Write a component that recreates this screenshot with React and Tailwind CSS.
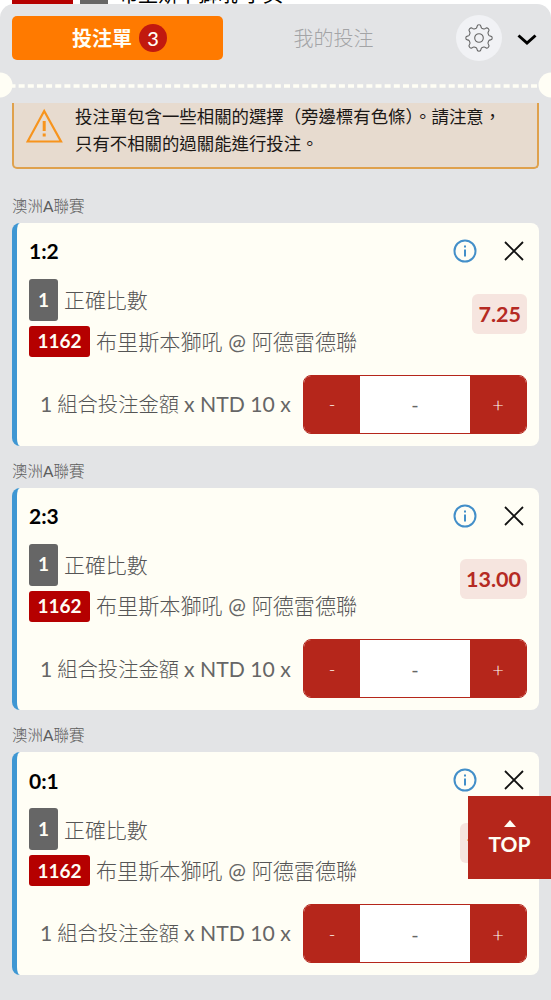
const selections = [
  { score: "1:2", odds: "7.25" },
  { score: "2:3", odds: "13.00" },
  { score: "0:1", odds: "11.00" },
];

const GearIcon = () => (
  <svg width="28" height="28" viewBox="-14 -14 28 28" fill="none" stroke="#666" strokeWidth="1.100" strokeLinejoin="round">
    <circle r="4.3" />
    <path d="M-2.800 -9.800 Q-2 -10.300 -1.900 -11.600 Q-1.800 -13.200 0 -13.200 Q1.800 -13.200 1.900 -11.600 Q2 -10.300 2.800 -9.800 Q4 -9.200 4.900 -9 Q5.800 -8.900 6.600 -9.600 Q7.800 -10.700 9.300 -9.300 Q10.700 -7.800 9.600 -6.600 Q8.900 -5.800 9 -4.900 Q9.200 -4 9.800 -2.800 Q10.300 -2 11.600 -1.900 Q13.200 -1.800 13.200 0 Q13.200 1.800 11.600 1.900 Q10.300 2 9.800 2.800 Q9.200 4 9 4.900 Q8.900 5.800 9.600 6.600 Q10.700 7.800 9.300 9.300 Q7.800 10.700 6.600 9.600 Q5.800 8.900 4.900 9 Q4 9.200 2.800 9.800 Q2 10.300 1.900 11.600 Q1.800 13.200 0 13.200 Q-1.800 13.200 -1.900 11.600 Q-2 10.300 -2.800 9.800 Q-4 9.200 -4.900 9 Q-5.800 8.900 -6.600 9.600 Q-7.800 10.700 -9.300 9.300 Q-10.700 7.800 -9.600 6.600 Q-8.900 5.800 -9 4.900 Q-9.200 4 -9.800 2.800 Q-10.300 2 -11.600 1.900 Q-13.200 1.800 -13.200 0 Q-13.200 -1.800 -11.600 -1.900 Q-10.300 -2 -9.800 -2.800 Q-9.200 -4 -9 -4.900 Q-8.900 -5.800 -9.600 -6.600 Q-10.700 -7.800 -9.300 -9.300 Q-7.800 -10.700 -6.600 -9.600 Q-5.800 -8.900 -4.900 -9 Q-4 -9.200 -2.800 -9.800 Z" />
  </svg>
);

const Header = () => (
  <header className="relative h-[99px] shrink-0 rounded-t-[14px] bg-[#e3e4e6] pt-3 pl-3">
    <div className="flex h-11 items-center">
      <button className="flex h-11 w-[211px] items-center justify-center gap-[7px] rounded-[5px] bg-[#ff7a00] pl-1 text-xl font-bold text-[#fffef5]">
        投注單
        <span className="flex size-7 items-center justify-center rounded-full bg-[#c1190f] text-xl font-medium">3</span>
      </button>
      <button className="w-[221px] text-center text-xl font-light text-[#a3a4a6]">我的投注</button>
      <button className="ml-3 flex size-[46px] items-center justify-center rounded-full bg-[#f1f2f5]">
        <GearIcon />
      </button>
      <svg className="mt-[3px] ml-[15px]" width="20" height="12" viewBox="0 0 20 12" fill="none" stroke="#000" strokeWidth="3">
        <path d="M1.5 1.5 L10 9 L18.500 1.500" />
      </svg>
    </div>
    <svg className="absolute top-[68px] left-0" width="551" height="26" viewBox="0 0 551 26">
      <path d="M9.500 14 H540" stroke="#fffef5" strokeWidth="3.500" strokeDasharray="6 3.150" />
      <circle cx="0" cy="13" r="12.500" fill="#fffef5" />
      <circle cx="551" cy="13" r="12.500" fill="#fffef5" />
    </svg>
  </header>
);

const Notice = () => (
  <div className="mx-3 flex h-[66px] rounded-b-[5px] border-2 border-t-0 border-[#dfa14d] bg-[#e7dbcf] pl-3">
    <svg className="mt-[5px] shrink-0" width="37" height="36" viewBox="0 0 37 36" fill="none" stroke="#f7941d" strokeWidth="2.200">
      <path d="M18.200 3 L35 33.500 H1.600 Z" />
      <path d="M18.200 13 V23 M18.200 25.500 V28.500" strokeWidth="3" />
    </svg>
    <p className="ml-3 text-[17.4px] leading-[27px] whitespace-nowrap text-[#1b1715]">
      投注單包含一些相關的選擇（旁邊標有色條）。請注意，
      <br />
      只有不相關的過關能進行投注。
    </p>
  </div>
);

const Stepper = () => (
  <div className="flex h-[59px] w-[224px] overflow-hidden rounded-lg border border-[#b5261b] bg-white text-[#fffef5]">
    <button className="w-14 bg-[#b5261b] text-lg font-light">-</button>
    <span className="flex flex-1 items-center justify-center text-xl text-[#666]">-</span>
    <button className="w-14 bg-[#b5261b] text-xl font-light">+</button>
  </div>
);

const BetCard = ({ selection }) => {
  const { score, odds } = selection;
  return (
    <section>
      <h2 className="h-[42px] pt-[13px] text-[15.500px] leading-6 text-[#5c5c5c]">
        <span className="font-light">澳洲</span>A<span className="font-light">聯賽</span>
      </h2>
      <div className="h-[222.7px] rounded-lg border-l-[5px] border-[#3f97d3] bg-[#fffef5] pr-3 pl-3">
        <div className="flex h-14 items-center">
          <p className="flex-1 text-[21px] font-bold text-black">{score}</p>
          <svg width="24" height="24" viewBox="0 0 24 24" fill="none" stroke="#438fc9" strokeWidth="2">
            <circle cx="12" cy="12" r="10.500" />
            <path d="M12 10.500 V17.500 M12 6.500 V8.500" />
          </svg>
          <svg className="mr-[3.500px] ml-[27px]" width="20" height="20" viewBox="0 0 20 20" stroke="#111" strokeWidth="1.800">
            <path d="M1 1 L19 19 M19 1 L1 19" />
          </svg>
        </div>
        <div className="flex h-[79px] text-[#555]">
          <div className="flex-1">
            <div className="flex h-[42px] items-center gap-[6px]">
              <span className="flex h-[42px] w-[29px] items-center justify-center rounded-[3px] bg-[#666] text-[19px] font-bold text-[#fffef5]">1</span>
              <span className="text-[20.900px] font-light">正確比數</span>
            </div>
            <div className="mt-[5px] flex h-[31px] items-center gap-[6px]">
              <span className="flex h-[31px] w-[61px] items-center justify-center rounded-[3px] bg-[#b50000] text-[19px] font-bold text-[#fffef5]">1162</span>
              <span className="text-[21.100px] font-light whitespace-nowrap">
                布里斯本獅吼 <span className="font-normal text-[#666]">@</span> 阿德雷德聯
              </span>
            </div>
          </div>
          <span className="mt-[15px] flex h-10 items-center justify-center rounded-md bg-[#f6e5df] px-[6px] text-[21.500px] font-bold text-[#b52a23]">
            {odds}
          </span>
        </div>
        <div className="mt-[16.800px] flex items-center justify-between pl-[11px]">
          <p className="mt-px text-[21.200px] whitespace-nowrap text-[#666]">
            1<span className="mr-[5px] ml-[5px] text-[20.300px] font-light text-[#555]">組合投注金額</span>x NTD 10 x
          </p>
          <Stepper />
        </div>
      </div>
    </section>
  );
};

const App = () => {
  return (
    <div className="relative flex h-[1000px] w-[551px] flex-col overflow-hidden bg-white font-['Lato','Noto_Sans_CJK_TC',sans-serif]">
      <div className="flex h-1 shrink-0 items-end overflow-hidden pl-3 text-xl text-black">
        <span className="h-4 w-[61px] shrink-0 bg-[#b50000]" />
        <span className="ml-[7px] h-4 w-[28px] shrink-0 bg-[#666]" />
        <span className="ml-[10px] leading-5 whitespace-nowrap">布里斯本獅吼 小矣</span>
      </div>
      <Header />
      <main className="flex-1 bg-[#e3e4e6]">
        <Notice />
        <div className="px-3 pt-3">
          {selections.map((selection) => (
            <BetCard key={selection.score} selection={selection} />
          ))}
        </div>
      </main>
      <a href="#top" className="absolute top-[796px] right-0 flex h-[82.500px] w-[83px] flex-col items-center bg-[#b5261b] pt-6 text-[#fffef5]">
        <svg width="12" height="7" viewBox="0 0 12 7" fill="currentColor">
          <path d="M0 7 L6 0 L12 7 Z" />
        </svg>
        <span className="mt-[3px] text-[21px] leading-7 font-bold">TOP</span>
      </a>
    </div>
  );
};

export default App;
